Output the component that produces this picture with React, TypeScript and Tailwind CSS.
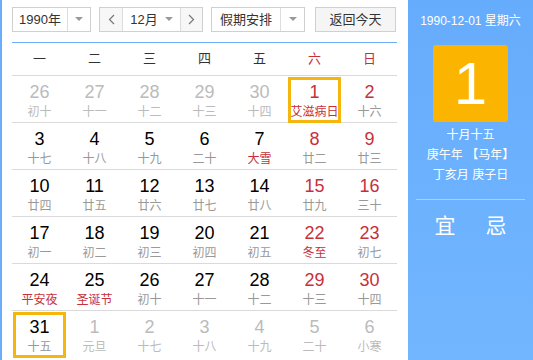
import React from "react";

type Day = { d: number; l: string; other?: boolean; redNum?: boolean; redL?: boolean; sel?: boolean };

const rows: Day[][] = [
  [
    { d: 26, l: "初十", other: true },
    { d: 27, l: "十一", other: true },
    { d: 28, l: "十二", other: true },
    { d: 29, l: "十三", other: true },
    { d: 30, l: "十四", other: true },
    { d: 1, l: "艾滋病日", redNum: true, redL: true, sel: true },
    { d: 2, l: "十六", redNum: true },
  ],
  [
    { d: 3, l: "十七" },
    { d: 4, l: "十八" },
    { d: 5, l: "十九" },
    { d: 6, l: "二十" },
    { d: 7, l: "大雪", redL: true },
    { d: 8, l: "廿二", redNum: true },
    { d: 9, l: "廿三", redNum: true },
  ],
  [
    { d: 10, l: "廿四" },
    { d: 11, l: "廿五" },
    { d: 12, l: "廿六" },
    { d: 13, l: "廿七" },
    { d: 14, l: "廿八" },
    { d: 15, l: "廿九", redNum: true },
    { d: 16, l: "三十", redNum: true },
  ],
  [
    { d: 17, l: "初一" },
    { d: 18, l: "初二" },
    { d: 19, l: "初三" },
    { d: 20, l: "初四" },
    { d: 21, l: "初五" },
    { d: 22, l: "冬至", redNum: true, redL: true },
    { d: 23, l: "初七", redNum: true },
  ],
  [
    { d: 24, l: "平安夜", redL: true },
    { d: 25, l: "圣诞节", redL: true },
    { d: 26, l: "初十" },
    { d: 27, l: "十一" },
    { d: 28, l: "十二" },
    { d: 29, l: "十三", redNum: true },
    { d: 30, l: "十四", redNum: true },
  ],
  [
    { d: 31, l: "十五", sel: true },
    { d: 1, l: "元旦", other: true },
    { d: 2, l: "十七", other: true },
    { d: 3, l: "十八", other: true },
    { d: 4, l: "十九", other: true },
    { d: 5, l: "二十", other: true },
    { d: 6, l: "小寒", other: true },
  ],
];

const weekdays = ["一", "二", "三", "四", "五", "六", "日"];

function Caret() {
  return (
    <svg width="8" height="5" viewBox="0 0 8 5">
      <path d="M0 0 L8 0 L4 4 Z" fill="#999" />
    </svg>
  );
}

export default function App() {
  return (
    <div
      className="flex w-[533px] h-[360px] bg-white overflow-hidden border-l-2 border-[#6aaefc]"
      style={{ fontFamily: '"Liberation Sans", "Noto Sans CJK SC", sans-serif' }}
    >
      {/* Calendar */}
      <div className="w-[406px] pl-[10px] pr-[11px] pt-[7px]">
        <div className="flex h-[25px] text-[13px] text-[#333]">
          <div className="flex w-[79px] border border-[#d0d0d0] bg-white">
            <div className="flex-1 flex items-center justify-center">1990年</div>
            <div className="w-[23px] border-l border-[#dcdcdc] flex items-center justify-center">
              <Caret />
            </div>
          </div>
          <div className="ml-[8px] flex w-[104px] border border-[#d0d0d0] bg-white">
            <div className="w-[23px] border-r border-[#dcdcdc] bg-[#f7f7f7] flex items-center justify-center">
              <svg width="7" height="11" viewBox="0 0 7 11">
                <path d="M6 1 L1.5 5.5 L6 10" fill="none" stroke="#777" strokeWidth="1.2" />
              </svg>
            </div>
            <div className="flex-1 flex items-center justify-center gap-[7px]">
              <span>12月</span>
              <Caret />
            </div>
            <div className="w-[22px] border-l border-[#dcdcdc] bg-[#f7f7f7] flex items-center justify-center">
              <svg width="7" height="11" viewBox="0 0 7 11">
                <path d="M1 1 L5.5 5.5 L1 10" fill="none" stroke="#777" strokeWidth="1.2" />
              </svg>
            </div>
          </div>
          <div className="ml-[8px] flex w-[94px] border border-[#d0d0d0] bg-white">
            <div className="flex-1 flex items-center justify-center">假期安排</div>
            <div className="w-[24px] border-l border-[#dcdcdc] flex items-center justify-center">
              <Caret />
            </div>
          </div>
          <div className="ml-[10px] w-[81px] border border-[#d0d0d0] bg-[#f5f5f5] flex items-center justify-center">
            返回今天
          </div>
        </div>

        <div className="mt-[10px] h-px bg-[#6aaefc]" />

        <div className="grid grid-cols-7 h-[33px] items-center border-b border-[#dadada] text-[13px]">
          {weekdays.map((w, i) => (
            <div key={w} className={`text-center ${i >= 5 ? "text-[#c7303a]" : "text-[#333]"}`}>
              {w}
            </div>
          ))}
        </div>

        {rows.map((row, ri) => (
          <div
            key={ri}
            className={`grid grid-cols-7 h-[47px] ${ri < rows.length - 1 ? "border-b border-[#dadada]" : ""}`}
          >
            {row.map((c, ci) => {
              const numColor = c.other ? "text-[#bbbbbb]" : c.redNum ? "text-[#c7303a]" : "text-black";
              const lColor = c.other ? "text-[#bbbbbb]" : c.redL ? "text-[#c7303a]" : "text-[#999]";
              return (
                <div key={ci} className="px-[1px] pt-[1px] pb-[2px]">
                  <div
                    className={`h-full flex flex-col items-center ${
                      c.sel ? "border-[3px] border-[#f5b70d] pt-[1px]" : "pt-[4px]"
                    }`}
                  >
                    <div className={`text-[18px] leading-[22px] ${numColor}`}>{c.d}</div>
                    <div className={`whitespace-nowrap text-[12px] leading-[16px] mt-[1px] ${lColor}`}>{c.l}</div>
                  </div>
                </div>
              );
            })}
          </div>
        ))}
      </div>

      {/* Side panel */}
      <div className="flex-1 bg-gradient-to-b from-[#66acfc] to-[#72b6ff] flex flex-col items-center text-white">
        <div className="mt-[13px] text-[12px] leading-[16px]">1990-12-01 星期六</div>
        <div className="mt-[16px] w-[75px] h-[77px] rounded-[3px] bg-[#fbb400] flex items-center justify-center text-[60px] leading-none">
          1
        </div>
        <div className="mt-[3px] text-[12px] leading-[20px] text-center">
          <div>十月十五</div>
          <div>庚午年 【马年】</div>
          <div>丁亥月 庚子日</div>
        </div>
        <div className="mt-[14px] w-[109px] h-px bg-[#a9d0ff]" />
        <div className="mt-[13px] flex gap-[30px] text-[21px] leading-[26px]">
          <span>宜</span>
          <span>忌</span>
        </div>
      </div>
    </div>
  );
}
